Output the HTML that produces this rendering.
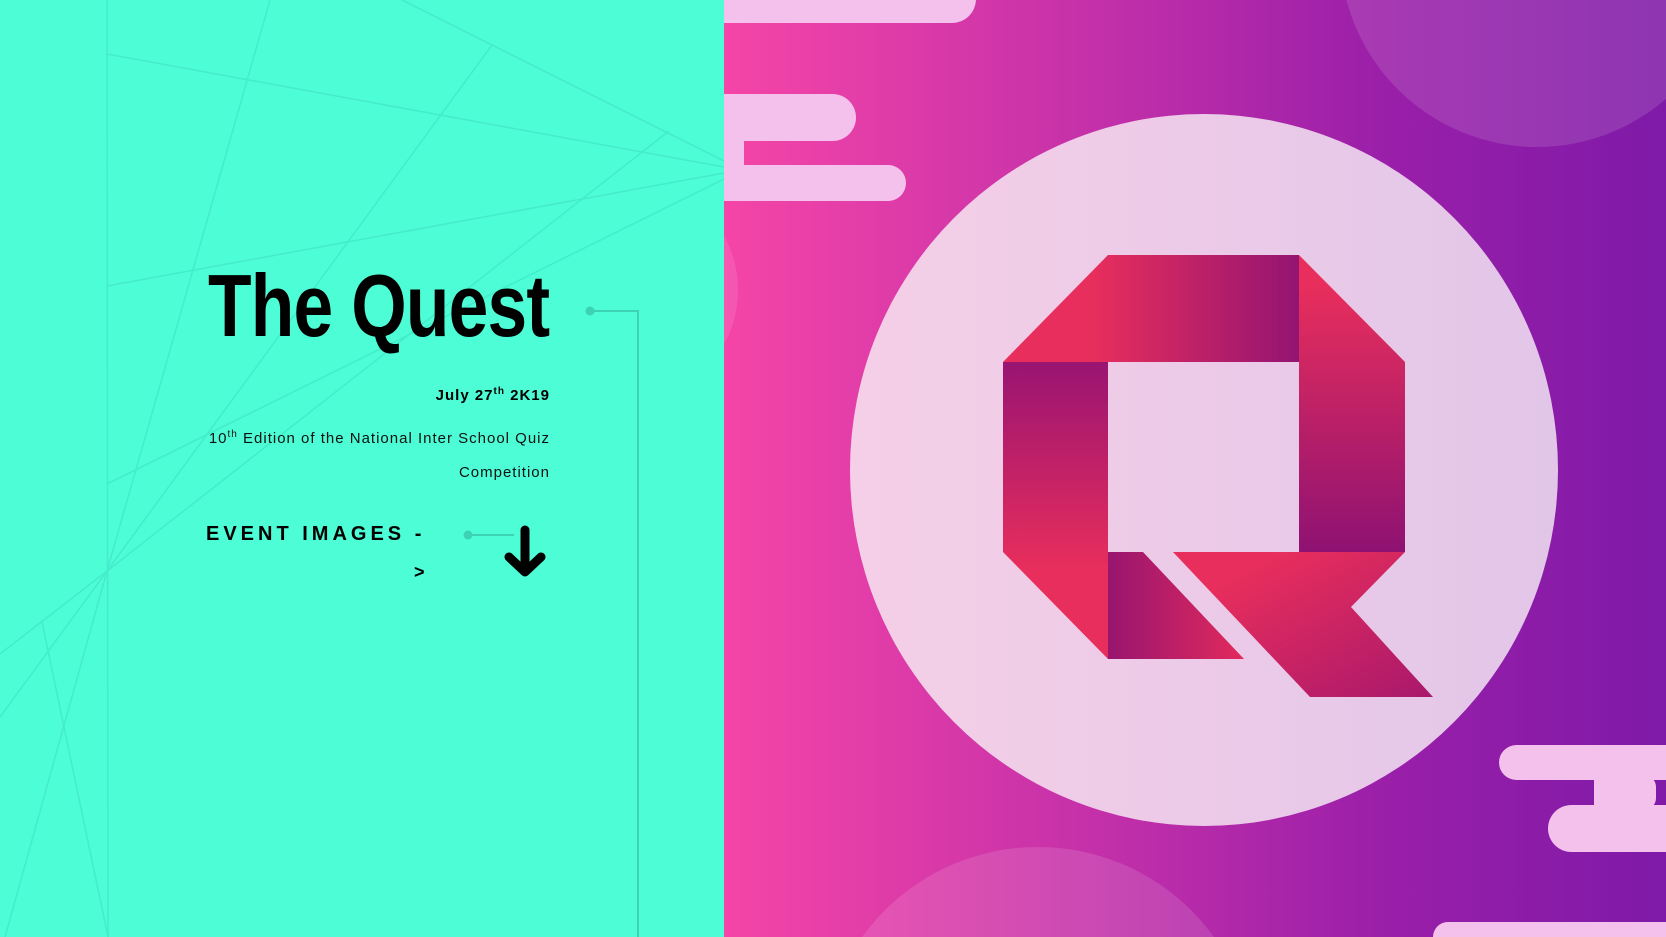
<!DOCTYPE html>
<html><head><meta charset="utf-8"><style>
html,body{margin:0;padding:0;width:1666px;height:937px;overflow:hidden;font-family:"Liberation Sans",sans-serif}
#l{position:absolute;left:0;top:0;width:724px;height:937px;background:#4dfdd6;overflow:hidden}
#r{position:absolute;left:724px;top:0;width:942px;height:937px;background:linear-gradient(90deg,#f545a7 0%,#c330a9 40%,#9a1fa9 70%,#7f1aa8 100%);overflow:hidden}
.a{position:absolute}
.lt{background:#f4c1ec}
h1{position:absolute;left:208px;top:255px;margin:0;font-size:88px;font-weight:bold;letter-spacing:-1px;transform:scaleX(0.81);transform-origin:left top;color:#000;white-space:nowrap}
.t{position:absolute;right:174px;text-align:right;color:#000;letter-spacing:1px;white-space:nowrap}
sup{font-size:10px}
</style></head><body>
<div id="l">
<svg class="a" width="724" height="937" style="left:0;top:0" stroke="#44eccb" stroke-width="1.5" fill="none">
<line x1="107" y1="0" x2="108" y2="937"/>
<line x1="107" y1="54" x2="724" y2="167"/>
<line x1="402" y1="0" x2="724" y2="161"/>
<line x1="107" y1="286" x2="724" y2="173"/>
<line x1="107" y1="484" x2="724" y2="179"/>
<line x1="107" y1="571" x2="669" y2="131"/>
<line x1="107" y1="571" x2="492" y2="45"/>
<line x1="107" y1="571" x2="270" y2="0"/>
<line x1="0" y1="654" x2="107" y2="571"/>
<line x1="0" y1="717" x2="107" y2="571"/>
<line x1="42" y1="622" x2="108" y2="937"/>
<line x1="107" y1="571" x2="5" y2="937"/>
</svg>
<svg class="a" width="724" height="937" style="left:0;top:0">
<circle cx="590" cy="311" r="4.5" fill="#3dd3b2"/>
<path d="M590 311H638V937" stroke="#3dd3b2" stroke-width="2" fill="none"/>
<circle cx="468" cy="535" r="4.5" fill="#3dd3b2"/>
<path d="M468 535H514" stroke="#3dd3b2" stroke-width="2" fill="none"/>
<path d="M525 530V571M509 557L525 572L541 557" stroke="#000" stroke-width="9" stroke-linecap="round" stroke-linejoin="round" fill="none"/>
</svg>
<h1>The Quest</h1>
<div class="t" style="top:386px;font-size:15px;font-weight:bold">July 27<sup>th</sup> 2K19</div>
<div class="t" style="top:418px;font-size:15px;font-weight:300;line-height:34px;color:#111">10<sup>th</sup> Edition of the National Inter School Quiz<br>Competition</div>
<div class="a" style="left:206px;top:523px;font-size:20px;font-weight:bold;letter-spacing:4px">EVENT IMAGES -</div>
<div class="a" style="left:414px;top:562px;font-size:18px;font-weight:bold">&gt;</div>
</div>
<div id="r">
<div class="a" style="left:616px;top:-247px;width:394px;height:394px;border-radius:50%;background:rgba(255,255,255,0.12)"></div>
<div class="a" style="left:97px;top:847px;width:434px;height:434px;border-radius:50%;background:rgba(255,255,255,0.12)"></div>
<div class="a" style="left:-200px;top:180px;width:214px;height:220px;border-radius:50%;background:rgba(255,255,255,0.1)"></div>
<div class="a lt" style="left:-20px;top:-20px;width:272px;height:43px;border-radius:0 0 24px 0"></div>
<div class="a lt" style="left:-20px;top:94px;width:152px;height:47px;border-radius:0 24px 24px 0"></div>
<div class="a lt" style="left:-20px;top:130px;width:40px;height:45px"></div>
<div class="a lt" style="left:-20px;top:165px;width:202px;height:36px;border-radius:0 18px 18px 0"></div>
<div class="a" style="left:126px;top:114px;width:708px;height:712px;border-radius:50%;background:linear-gradient(90deg,#f5cfe7,#e2c6e8)"></div>
<div class="a lt" style="left:775px;top:745px;width:200px;height:35px;border-radius:18px 0 0 18px"></div>
<div class="a lt" style="left:870px;top:775px;width:62px;height:35px;border-radius:0 12px 12px 0"></div>
<div class="a lt" style="left:824px;top:805px;width:150px;height:47px;border-radius:24px 0 0 24px"></div>
<div class="a lt" style="left:709px;top:922px;width:300px;height:15px;border-radius:24px 0 0 0"></div>
<svg class="a" width="942" height="937" style="left:0;top:0">
<defs>
<linearGradient id="g1" x1="0" y1="0" x2="1" y2="0"><stop offset="0.3" stop-color="#e82e5c"/><stop offset="1" stop-color="#941472"/></linearGradient>
<linearGradient id="g2" x1="0" y1="0" x2="0" y2="1"><stop offset="0" stop-color="#991472"/><stop offset="0.7" stop-color="#e82e5c"/></linearGradient>
<linearGradient id="g3" x1="0" y1="0" x2="0" y2="1"><stop offset="0.1" stop-color="#e82e5c"/><stop offset="1" stop-color="#8e1272"/></linearGradient>
<linearGradient id="g4" x1="0" y1="0" x2="1" y2="0"><stop offset="0" stop-color="#98156f"/><stop offset="1" stop-color="#e22a5c"/></linearGradient>
<linearGradient id="g5" x1="0" y1="0" x2="1" y2="1"><stop offset="0.2" stop-color="#e82e5c"/><stop offset="1" stop-color="#a9186c"/></linearGradient>
</defs>
<polygon points="279,362 384,255 575,255 575,362" fill="url(#g1)"/>
<polygon points="575,255 681,362 681,552 575,552" fill="url(#g3)"/>
<polygon points="279,362 384,362 384,659 279,552" fill="url(#g2)"/>
<polygon points="384,552 419,552 520,659 384,659" fill="url(#g4)"/>
<polygon points="449,552 681,552 627,607 709,697 586,697" fill="url(#g5)"/>
</svg>
</div>
</body></html>
